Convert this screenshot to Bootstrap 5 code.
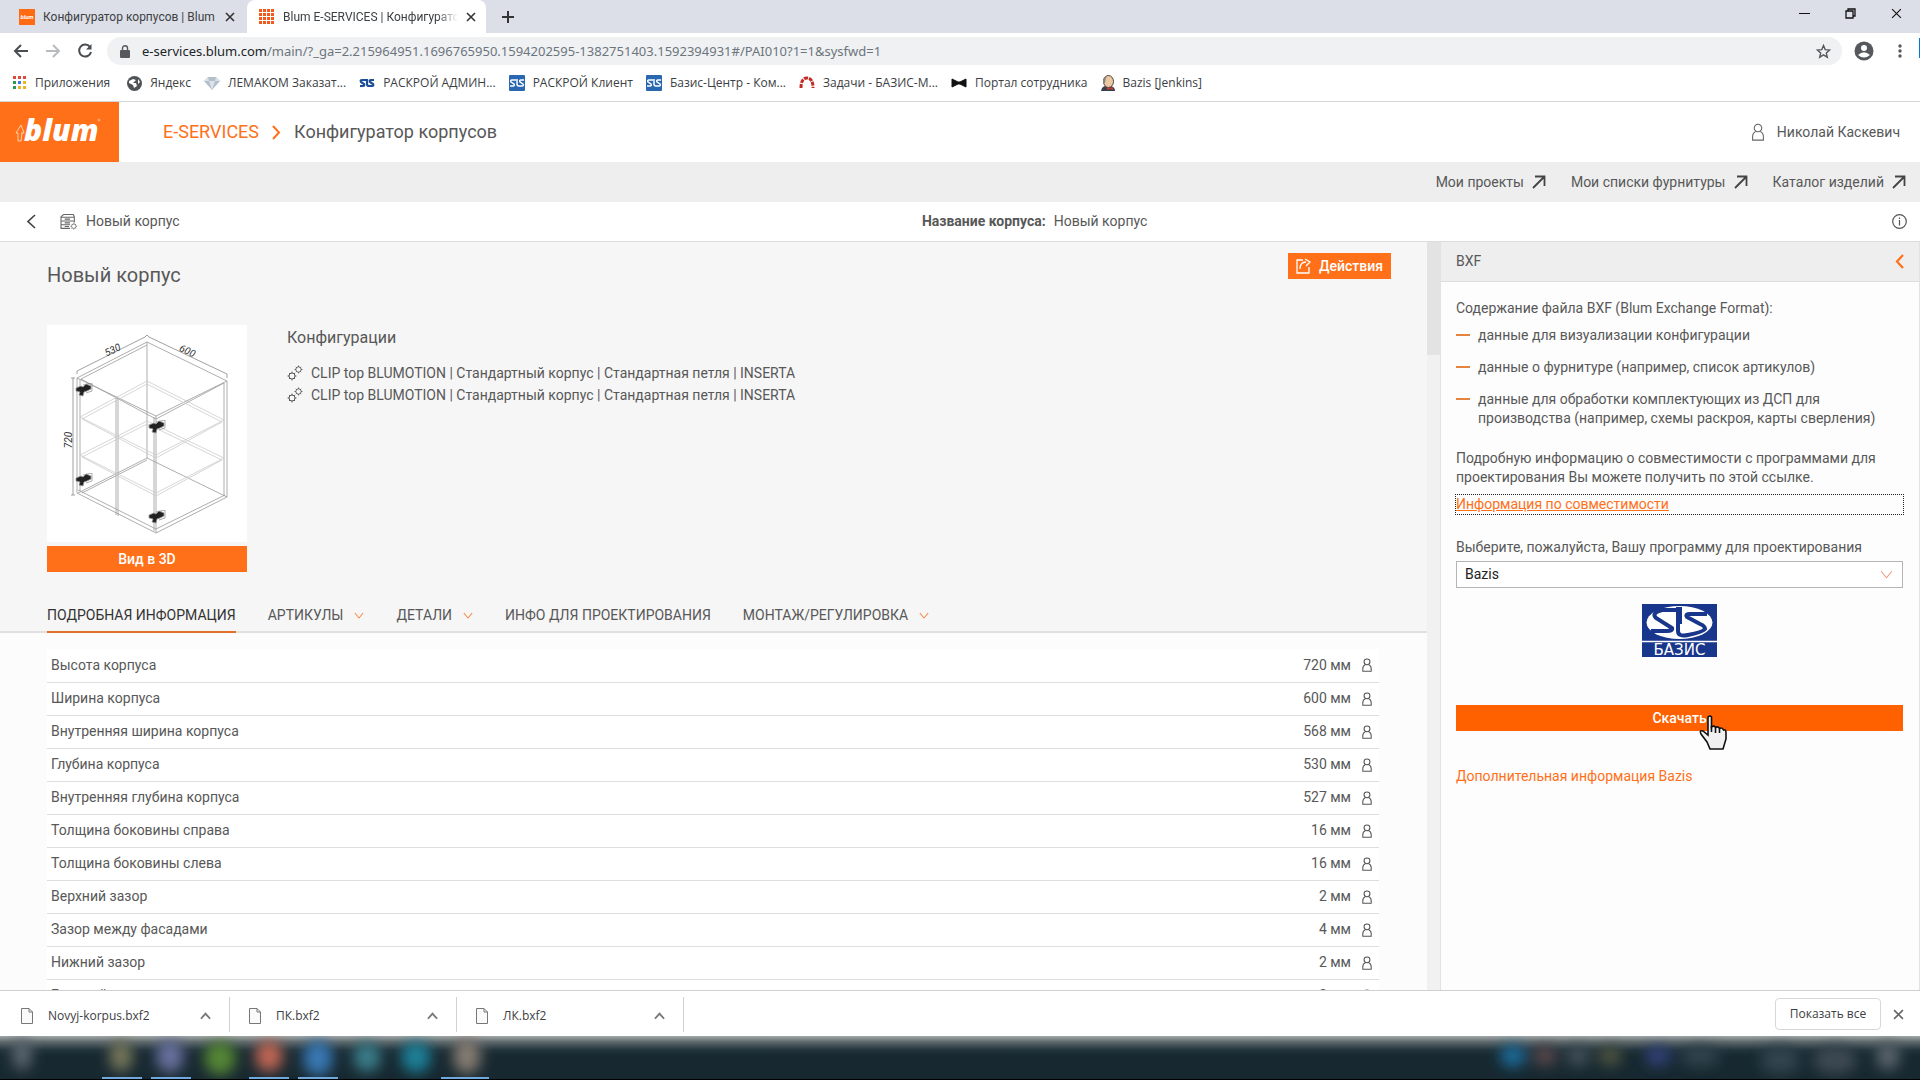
<!DOCTYPE html>
<html lang="ru">
<head>
<meta charset="utf-8">
<meta name="viewport" content="width=device-width, initial-scale=1">
<title>Blum E-SERVICES | Конфигуратор корпусов</title>
<link href="https://cdn.jsdelivr.net/npm/bootstrap@5.3.0/dist/css/bootstrap.min.css" rel="stylesheet">
<style>
:root{--blum:#ff7019;--ink:#585858;--line:#ddd}
body{font-family:Roboto,"Noto Sans",sans-serif;font-size:14px;line-height:19px;color:var(--ink);background:#fff}
button{background:none;border:0;padding:0;color:inherit}
svg{display:block;flex:none}
a{color:inherit;text-decoration:none}
.chrome{font-family:"Open Sans","Noto Sans",sans-serif;font-size:12px;line-height:16px;color:#3c4043}
.tabstrip{height:33px;background:#dcdfe7;font-family:Roboto,sans-serif}
.btab{width:247px;padding:0 12px 0 19px;gap:8px}
.btab.on{width:239px;background:#fff;border-radius:8px 8px 0 0;padding:0 10px 0 12px}
.btab .cap{flex:1;overflow:hidden;white-space:nowrap}
.btab.on .cap{-webkit-mask-image:linear-gradient(90deg,#000 88%,transparent);mask-image:linear-gradient(90deg,#000 88%,transparent)}
.winbtns{gap:35px;padding:0 18px 6px 0}
.toolbar{padding:4px 18px 0 13px}
.omni{height:28px;border-radius:14px;background:#f0f1f3;padding:0 11px 0 13px;gap:12px;margin-left:14px;font-size:13px;font-family:"Noto Sans",sans-serif}
.bookmarks{height:37px;padding:0 13px;border-bottom:1px solid #d5d6d8}
.bookmarks nav{gap:13px}
.bookmarks a{white-space:nowrap}
.edge{position:absolute;right:0;top:38px;width:1px;height:20px;background:#0078d7}
.brandbar{height:60px}
.logo{width:119px;height:60px;background:var(--blum)}
.crumbs{font-size:18px;line-height:24px;padding-left:44px;gap:13px}
.orange{color:var(--blum)}
.linksbar{height:40px;background:#eee;padding-right:14px;gap:25px}
.titlebar{height:40px;border-bottom:1px solid var(--line);padding:0 13px 0 26px}
.titlebar .back{width:48%}
.titlebar .case{margin-right:28px;margin-left:-7px}
.work{min-height:0}
.leftpane{min-width:0;background:#fcfcfc}
.summary{background:#f6f6f6;border-bottom:2px solid #e0e0e0;padding:11px 36px 0 47px}
.summary h1{font-size:20px;line-height:26px;padding-top:9px;margin:0;font-weight:400}
.obtn{background:var(--blum);color:#fff;font-weight:500;height:26px;line-height:26px}
.overview{padding-top:37px}
.preview{width:200px}
.preview .pic{background:#fff;height:217px;margin-bottom:4px}
.configs{padding:2px 0 0 40px}
.summary h2{font-size:16px;line-height:22px;margin:0 0 13px;font-weight:400}
.conf{line-height:22px;gap:8px}
.sections{gap:32px;height:61px;margin-bottom:-2px}
.sections button{height:29px;border-bottom:2px solid transparent;padding-bottom:4px;gap:11px}
.sections button.on{color:#333;border-color:#e0702c}
.specs{margin:16px 0 0;width:calc(100% - 95px);margin-left:47px;background:#fff}
.specs td,.specs th{height:33px;padding:0 4px;border-bottom:1px solid var(--line);font-weight:400}
.measure{gap:11px;padding-right:3px}
.track{width:13px;background:#f1f1f1}
.thumb{height:113px;background:#e3e3e3}
.bxf{width:480px;border-left:1px solid #e2e2e2;border-right:1px solid #e2e2e2;background:#fdfdfd}
.bxf header{height:40px;background:#eee;border-bottom:1px solid var(--line);padding:0 15px}
.bxfbody{padding:17px 16px 0 15px}
.dashes{list-style:none;margin:0;padding:8px 0 0}
.dashes li{padding-left:22px;margin-bottom:13px;position:relative}
.dashes li::before{content:"";position:absolute;left:0;top:8px;width:14px;height:2px;background:#e5843f}
.compat{outline:1px dotted #222;color:var(--blum);text-decoration:underline;margin:8px 0 24px}
.prog{appearance:none;width:100%;height:27px;border:1px solid #b5b5b5;border-radius:0;padding:0 8px;background:#fff;color:#222}
.prog+svg{position:absolute;right:10px;top:9px}
.hand{position:absolute;left:243px;top:10px}
.download{background:#ff6000}
.moreinfo{margin-top:36px}
.dl{height:46px;border-top:1px solid #cfd0d2;padding-top:1px}
.dl .file{width:227px;padding:2px 18px 0 19px;border-right:1px solid #d0d0d0;margin:5px 0 4px;gap:15px}
.dl .file:first-child{width:230px;padding-left:21px}
.showall{border:1px solid #d6d8da;border-radius:4px;height:32px;width:106px}
.taskbar{height:44px;background:linear-gradient(#a3a8a8,#5d686b 6px,#22343c 14px,#172830 20px,#172830);border-bottom:1px solid #000;overflow:hidden}
</style>
<script src="https://cdn.jsdelivr.net/npm/bootstrap@5.3.0/dist/js/bootstrap.bundle.min.js"></script>
</head>
<body class="vh-100 d-flex flex-column overflow-hidden">
<svg width="0" height="0" class="position-absolute">
<defs>
<symbol id="user" viewBox="0 0 14 20"><circle cx="7" cy="5.500" r="4.200"/><path d="M4.500 9.500C2 10.500 1 13 1 15.500V19H13V15.500C13 13 12 10.500 9.500 9.500"/></symbol>
<symbol id="ne" viewBox="0 0 14 14"><path d="M1 13L12 2M3 1.500H12.500V11" /></symbol>
<symbol id="x" viewBox="0 0 10 10"><path d="M1 1L9 9M9 1L1 9"/></symbol>
<symbol id="down" viewBox="0 0 12 8"><path d="M1 1L6 7L11 1"/></symbol>
<symbol id="up" viewBox="0 0 12 8"><path d="M1 7L6 1.500L11 7"/></symbol>
<symbol id="gear" viewBox="0 0 10 10"><circle cx="5" cy="5" r="3"/><path d="M5 2V.6M5 8V9.400M2 5H.6M8 5H9.400M2.900 2.900L2 2M7.100 2.900L8 2M2.900 7.100L2 8M7.100 7.100L8 8"/></symbol>
<symbol id="page" viewBox="0 0 12 16"><path d="M.5.5H8L11.500 4V15.500H.5ZM8 .5V4H11.500" fill="#fafafa" stroke="#777"/></symbol>
<symbol id="hinge" viewBox="0 0 18 14"><path d="M1 5L6 3L8 4L11 1L16 3V6L12 8L9 9L8 13L4 12L5 9L1 8Z" fill="#222"/><path d="M8 2L17 0V8L11 10" fill="none" stroke="#777" stroke-width=".6"/></symbol>
<symbol id="sls" viewBox="0 0 16 16"><path d="M7 5H3Q1 5 2 7L5 9Q6 11 4 11H1M8 4V9Q8 11 10 11H13Q15 11 14 9L11 7Q10 5 12 5H15" fill="none"/></symbol>
</defs>
</svg>

<div class="chrome">
  <div class="tabstrip d-flex align-items-center">
    <div class="btab d-flex align-items-center h-100">
      <svg width="16" height="16"><rect width="16" height="16" fill="#ff6a13"/><text x="8" y="10" font-size="6" font-weight="700" font-style="italic" fill="#fff" text-anchor="middle">blum</text></svg>
      <span class="cap">Конфигуратор корпусов | Blum</span>
      <button aria-label="Закрыть"><svg width="10" height="10" stroke="#333" stroke-width="1.600"><use href="#x"/></svg></button>
    </div>
    <div class="btab on d-flex align-items-center h-100">
      <svg width="16" height="16" viewBox="0 0 16 16" fill="none" stroke="#f05a1a" stroke-width="3" stroke-dasharray="3 1"><path d="M0 1.500H16M0 5.500H16M0 9.500H16M0 13.500H16"/></svg>
      <span class="cap">Blum E-SERVICES | Конфигуратор</span>
      <button aria-label="Закрыть"><svg width="10" height="10" stroke="#333" stroke-width="1.600"><use href="#x"/></svg></button>
    </div>
    <button class="ms-3" aria-label="Новая вкладка"><svg width="12" height="12" stroke="#333" stroke-width="2"><path d="M6 0V12M0 6H12"/></svg></button>
    <div class="winbtns d-flex align-items-center ms-auto">
      <button aria-label="Свернуть"><svg width="11" height="11" stroke="#111"><path d="M0 5.500H11"/></svg></button>
      <button aria-label="Окно"><svg width="11" height="11" stroke="#111" fill="none" stroke-width="1.300"><path d="M1 3H8V10H1ZM3 3V1H10V8H8"/></svg></button>
      <button aria-label="Закрыть окно"><svg width="11" height="11" stroke="#111" viewBox="0 0 10 10"><use href="#x"/></svg></button>
    </div>
  </div>
  <div class="toolbar d-flex align-items-center">
    <div class="d-flex align-items-center gap-3">
      <button aria-label="Назад"><svg width="16" height="16" fill="none" stroke="#4a4d51" stroke-width="2"><path d="M15 8H2M8 2L2 8L8 14"/></svg></button>
      <button aria-label="Вперёд"><svg width="16" height="16" fill="none" stroke="#b9bbbe" stroke-width="2"><path d="M1 8H14M8 2L14 8L8 14"/></svg></button>
      <button aria-label="Обновить"><svg width="16" height="16" fill="none" stroke="#4a4d51" stroke-width="2"><path d="M13 4A6 6 0 1 0 14 9"/><path d="M14.500 1V6.500H9Z" fill="#4a4d51" stroke="none"/></svg></button>
    </div>
    <div class="omni d-flex align-items-center flex-fill">
      <svg width="10" height="13" fill="#55585c"><rect y="5" width="10" height="8" rx="1"/><path d="M2.500 5V3A2.500 2.200 0 0 1 7.500 3V5" fill="none" stroke="#55585c" stroke-width="1.400"/></svg>
      <div class="flex-fill text-secondary"><span class="text-dark">e-services.blum.com</span>/main/?_ga=2.215964951.1696765950.1594202595-1382751403.1592394931#/PAI010?1=1&amp;sysfwd=1</div>
      <svg width="15" height="15" viewBox="0 0 15 15" fill="none" stroke="#55585c" stroke-width="1.400"><path d="M7.500 1.500L9.200 5.600L13.600 6L10.300 8.900L11.300 13.200L7.500 10.900L3.700 13.200L4.700 8.900L1.400 6L5.800 5.600Z"/></svg>
    </div>
    <button class="ms-2 ps-1" aria-label="Профиль"><svg width="20" height="20" viewBox="0 0 20 20"><circle cx="10" cy="10" r="9.500" fill="#55585c"/><circle cx="10" cy="7" r="3" fill="#fff"/><path d="M4 14Q10 8.500 16 14Q10 19 4 14" fill="#fff"/></svg></button>
    <button class="ms-4" aria-label="Меню"><svg width="4" height="14" fill="#55585c"><circle cx="2" cy="2" r="1.700"/><circle cx="2" cy="7" r="1.700"/><circle cx="2" cy="12" r="1.700"/></svg></button>
  </div>
  <div class="bookmarks d-flex align-items-center">
    <nav class="d-flex align-items-center">
    <a href="#" class="d-flex gap-2 align-items-center"><svg width="14" height="14" viewBox="0 0 14 14"><g fill="#e0483e"><path d="M0 0H3V3H0ZM5 0H8V3H5ZM10 0H13V3H10Z"/></g><path d="M0 5H3V8H0Z" fill="#2c9b52"/><path d="M5 5H8V8H5Z" fill="#3d7de0"/><path d="M10 5H13V8H10ZM5 10H8V13H5ZM10 10H13V13H10Z" fill="#e9b427"/><path d="M0 10H3V13H0Z" fill="#2c9b52"/></svg>Приложения</a>
    <a href="#" class="d-flex gap-2 align-items-center ms-1"><svg width="15" height="15" viewBox="0 0 15 15"><circle cx="7.500" cy="7.500" r="7.500" fill="#505356"/><path d="M2 5L6 3L9 4L6 7H9L10 10L7 12L6 9L2 7ZM11 3L13 6L11 8Z" fill="#fff"/></svg>Яндекс</a>
    <a href="#" class="d-flex gap-2 align-items-center"><svg width="16" height="14"><path d="M4 1H12L16 5L8 14L0 5Z" fill="#b4bfc9"/><path d="M5 5H11L8 14ZM4 1L5 5H0ZM12 1L11 5H16Z" fill="#dbe3ea"/></svg>ЛЕМАКОМ Заказат...</a>
    <a href="#" class="d-flex gap-2 align-items-center"><svg width="16" height="16" stroke="#1d4f96" stroke-width="2.200"><use href="#sls"/></svg>РАСКРОЙ АДМИН...</a>
    <a href="#" class="d-flex gap-2 align-items-center"><svg width="16" height="16"><rect width="16" height="16" rx="1" fill="#2a67b1"/><use href="#sls" stroke="#fff" stroke-width="1.500"/></svg>РАСКРОЙ Клиент</a>
    <a href="#" class="d-flex gap-2 align-items-center"><svg width="16" height="16"><rect width="16" height="16" rx="1" fill="#2a67b1"/><use href="#sls" stroke="#fff" stroke-width="1.500"/></svg>Базис-Центр - Ком...</a>
    <a href="#" class="d-flex gap-2 align-items-center"><svg width="16" height="14"><path d="M2 12Q2 2 8 2Q14 2 14 12" fill="none" stroke="#c52a22" stroke-width="3" stroke-dasharray="4 1"/></svg>Задачи - БАЗИС-М...</a>
    <a href="#" class="d-flex gap-2 align-items-center"><svg width="16" height="10"><path d="M1 1L7 4H9L15 1V9L9 6H7L1 9Z" fill="#111" stroke="#111"/></svg>Портал сотрудника</a>
    <a href="#" class="d-flex gap-2 align-items-center"><svg width="14" height="16"><path d="M0 16Q1 11 5 11H10Q14 12 14 16Z" fill="#36414d"/><ellipse cx="7.500" cy="6.500" rx="5" ry="6" fill="#e8c9a4" stroke="#5a4536"/><path d="M2 8Q1 2 6 1Q4 4 4 8Z" fill="#8a8478"/><path d="M6 12L9 13L12 12V15L9 14L6 15Z" fill="#c43a2e"/></svg>Bazis [Jenkins]</a>
    </nav>
  </div>
  <div class="edge"></div>
</div>

<header>
  <div class="brandbar d-flex align-items-center">
    <a href="#" class="logo" aria-label="blum"><svg width="119" height="60" viewBox="0 0 119 60"><text x="24" y="39" font-family="Open Sans" font-size="30" font-weight="800" font-style="italic" fill="#fff">blum</text><path d="M18 39V31H16L21 23L24 31H21M18 39H21L22 31" fill="none" stroke="#ffd9bd" stroke-width=".9"/><circle cx="99" cy="18" r="1" fill="none" stroke="#ffd9bd" stroke-width=".6"/></svg></a>
    <div class="crumbs d-flex align-items-center"><a href="#" class="orange">E-SERVICES</a><svg width="9" height="15" fill="none" stroke="#ff7019" stroke-width="2"><path d="M1 1L7 7.500L1 14"/></svg><span>Конфигуратор корпусов</span></div>
    <a href="#" class="ms-auto d-flex align-items-center pe-3 me-1"><svg width="14" height="18" fill="none" stroke="#666" stroke-width="1.200" class="me-2"><use href="#user"/></svg><span class="ps-1">Николай Каскевич</span></a>
  </div>
  <nav class="linksbar d-flex align-items-center justify-content-end">
    <a href="#" class="d-flex align-items-center gap-2">Мои проекты <svg width="14" height="14" fill="none" stroke="#444" stroke-width="1.800"><use href="#ne"/></svg></a>
    <a href="#" class="d-flex align-items-center gap-2">Мои списки фурнитуры <svg width="14" height="14" fill="none" stroke="#444" stroke-width="1.800"><use href="#ne"/></svg></a>
    <a href="#" class="d-flex align-items-center gap-2">Каталог изделий <svg width="14" height="14" fill="none" stroke="#444" stroke-width="1.800"><use href="#ne"/></svg></a>
  </nav>
  <div class="titlebar d-flex align-items-center">
    <div class="back d-flex align-items-center"><button aria-label="Назад"><svg width="10" height="15" fill="none" stroke="#444" stroke-width="1.700"><path d="M9 1L2 7.500L9 14"/></svg></button>
      <svg class="ms-4 me-2" width="18" height="16" viewBox="0 0 16 15" fill="none" stroke="#666"><path d="M3 .5H12L13 2.500V8M3 .5L.5 2.500V13.500H9M.5 3H12.500M.5 6.500H12.500M.5 10H9M4 4.800H9M4 8.300H9M4 11.800H8"/><use href="#gear" x="9" y="8" width="7" height="7"/></svg>Новый корпус</div>
    <div class="case"><b class="fw-bold me-2">Название корпуса:</b>Новый корпус</div>
    <button class="ms-auto" aria-label="Информация"><svg width="15" height="15" fill="none" stroke="#555" stroke-width="1.200"><circle cx="7.500" cy="7.500" r="6.800"/><path d="M7.500 6V11.500M7.500 3.500V5"/></svg></button>
  </div>
</header>

<main class="work d-flex flex-fill">
  <div class="leftpane flex-fill overflow-hidden">
    <section class="summary">
      <div class="d-flex justify-content-between align-items-start">
        <h1>Новый корпус</h1>
        <button class="obtn d-flex align-items-center gap-2 px-2"><svg width="15" height="16" fill="none" stroke="#fff" stroke-width="1.300"><path d="M7 2H1V15H13V9M4 11Q4 4 10 4M9 1L14 4L10 8"/></svg>Действия</button>
      </div>
      <div class="overview d-flex">
        <div class="preview">
          <div class="pic"><svg width="200" height="217" viewBox="0 0 200 217" fill="none" stroke="#999" stroke-width=".8">
            <path d="M100 17L30 53L109 91L180 56ZM100 20L34 54L109 94L177 58M30 53V168L109 208L180 172V56M33 54V166M177 58V171M100 17V133L31 168M100 133L180 172M109 91V208M107 92V206M69 72V190M71 73V191M31 165L109 204L178 170M100 135L35 168"/>
            <path d="M33 92L100 56L177 95L109 130ZM35 94L100 59L175 97L109 133Z" stroke="#ccc"/><path d="M33 130L100 96L177 133L109 168ZM35 132L100 99L175 135L109 171Z" stroke="#ccc"/>
            <path d="M30 49V46L98 12M102 12L180 49V53M26 53V170M24 53H28M24 170H28M98 12L100 10L102 12" stroke="#888"/>
            <g fill="#333" stroke="none" font-size="10" font-style="italic" text-anchor="middle"><text transform="translate(67 28) rotate(-25)">530</text><text transform="translate(139 29) rotate(25)">600</text><text transform="translate(25 115) rotate(-90)">720</text></g>
            <use href="#hinge" x="28" y="58" width="18" height="14"/><use href="#hinge" x="28" y="148" width="18" height="14"/><use href="#hinge" x="101" y="95" width="18" height="14"/><use href="#hinge" x="101" y="185" width="18" height="14"/>
          </svg></div>
          <button class="obtn w-100">Вид в 3D</button>
        </div>
        <div class="configs">
          <h2>Конфигурации</h2>
          <div class="conf d-flex align-items-center"><svg width="16" height="16" fill="none" stroke="#555"><use href="#gear" x="0" y="6" width="10" height="10"/><use href="#gear" x="7" y="0" width="9" height="9"/></svg>CLIP top BLUMOTION | Стандартный корпус | Стандартная петля | INSERTA</div>
          <div class="conf d-flex align-items-center"><svg width="16" height="16" fill="none" stroke="#555"><use href="#gear" x="0" y="6" width="10" height="10"/><use href="#gear" x="7" y="0" width="9" height="9"/></svg>CLIP top BLUMOTION | Стандартный корпус | Стандартная петля | INSERTA</div>
        </div>
      </div>
      <nav class="sections d-flex align-items-end">
        <button class="on">ПОДРОБНАЯ ИНФОРМАЦИЯ</button>
        <button class="d-flex align-items-center">АРТИКУЛЫ<svg width="10" height="7" fill="none" stroke="#f58a4b" stroke-width="1.300"><use href="#down"/></svg></button>
        <button class="d-flex align-items-center">ДЕТАЛИ<svg width="10" height="7" fill="none" stroke="#f58a4b" stroke-width="1.300"><use href="#down"/></svg></button>
        <button>ИНФО ДЛЯ ПРОЕКТИРОВАНИЯ</button>
        <button class="d-flex align-items-center">МОНТАЖ/РЕГУЛИРОВКА<svg width="10" height="7" fill="none" stroke="#f58a4b" stroke-width="1.300"><use href="#down"/></svg></button>
      </nav>
    </section>
    <table class="specs"><tbody id="rows"></tbody></table>
  </div>
  <div class="track"><div class="thumb"></div></div>
  <aside class="bxf">
    <header class="d-flex align-items-center justify-content-between"><span>BXF</span><button aria-label="Свернуть панель"><svg width="9" height="15" fill="none" stroke="#ff7019" stroke-width="2.200"><path d="M8 1L2 7.500L8 14"/></svg></button></header>
    <div class="bxfbody">
      <div>Содержание файла BXF (Blum Exchange Format):</div>
      <ul class="dashes"><li>данные для визуализации конфигурации</li><li>данные о фурнитуре (например, список артикулов)</li><li>данные для обработки комплектующих из ДСП для производства (например, схемы раскроя, карты сверления)</li></ul>
      <div class="pt-2">Подробную информацию о совместимости с программами для проектирования Вы можете получить по этой ссылке.</div>
      <a href="#" class="compat d-block">Информация по совместимости</a>
      <label for="prog" class="d-block mb-1">Выберите, пожалуйста, Вашу программу для проектирования</label>
      <div class="position-relative"><select id="prog" class="prog d-block"><option>Bazis</option></select><svg width="13" height="9" viewBox="0 0 12 8" fill="none" stroke="#f0957a"><use href="#down"/></svg></div>
      <svg class="mx-auto mt-3 mb-5" width="75" height="53" viewBox="0 0 75 53"><rect width="75" height="53" fill="#18368c"/><path d="M0 37.500H75" stroke="#fff" stroke-width="1.500"/><ellipse cx="37.500" cy="18.500" rx="33" ry="16.500" fill="#fff"/><path d="M34 6H20Q9 9 14 14L30 24Q31 27 25 27H9M36 3V27Q36 33 46 31Q61 28 63 25Q63 22 58 20L45 13Q43 10 48 10H65M38 3V20" fill="none" stroke="#18368c" stroke-width="4"/><text x="37.500" y="51" font-family="DejaVu Sans" font-size="15" fill="#fff" text-anchor="middle">БАЗИС</text></svg>
      <div class="position-relative"><button class="obtn w-100 download">Скачать</button>
        <svg class="hand" width="28" height="35" viewBox="0 0 28 35"><path d="M9 2Q11 0 12.500 2V12Q15 10 16.500 12.500Q19 11 20.500 13.500Q23 12 24.500 15Q27 14 27 18V24L24 34H11L8 27L2 19Q0 15 4 16L9 20Z" fill="#f1f1f1" stroke="#111" stroke-width="1.600"/><path d="M12.500 11V17M16.500 13V18M20.500 14V18" stroke="#111" stroke-width="1.600"/></svg></div>
      <a href="#" class="orange d-block moreinfo">Дополнительная информация Bazis</a>
    </div>
  </aside>
</main>

<footer>
  <div class="dl chrome d-flex">
    <div class="file d-flex align-items-center"><svg width="12" height="16"><use href="#page"/></svg><span class="flex-fill">Novyj-korpus.bxf2</span><button aria-label="Меню файла"><svg width="11" height="8" fill="none" stroke="#777" stroke-width="2"><use href="#up"/></svg></button></div>
    <div class="file d-flex align-items-center"><svg width="12" height="16"><use href="#page"/></svg><span class="flex-fill">ПК.bxf2</span><button aria-label="Меню файла"><svg width="11" height="8" fill="none" stroke="#777" stroke-width="2"><use href="#up"/></svg></button></div>
    <div class="file d-flex align-items-center"><svg width="12" height="16"><use href="#page"/></svg><span class="flex-fill">ЛК.bxf2</span><button aria-label="Меню файла"><svg width="11" height="8" fill="none" stroke="#777" stroke-width="2"><use href="#up"/></svg></button></div>
    <div class="ms-auto d-flex align-items-center gap-2 pe-2 me-1"><button class="showall me-1">Показать все</button><button class="me-1" aria-label="Закрыть"><svg width="11" height="11" viewBox="0 0 10 10" stroke="#666" stroke-width="1.500"><use href="#x"/></svg></button></div>
  </div>
  <div class="taskbar"><svg width="1920" height="43"><defs><filter id="soft" x="-60%" y="-60%" width="220%" height="220%"><feGaussianBlur stdDeviation="7"/></filter></defs>
    <g filter="url(#soft)"><ellipse cx="22" cy="18" rx="10" ry="16" fill="#5d6670"/><ellipse cx="121" cy="20" rx="12" ry="16" fill="#74765a"/><ellipse cx="170" cy="20" rx="14" ry="17" fill="#686f9d"/><ellipse cx="220" cy="22" rx="16" ry="17" fill="#558634"/><ellipse cx="269" cy="20" rx="14" ry="16" fill="#c06654"/><ellipse cx="318" cy="22" rx="15" ry="18" fill="#3878b4"/><ellipse cx="367" cy="21" rx="14" ry="15" fill="#3a7d8a"/><ellipse cx="416" cy="21" rx="15" ry="16" fill="#1f8098"/><ellipse cx="467" cy="20" rx="14" ry="18" fill="#857c72"/>
    <ellipse cx="1513" cy="20" rx="13" ry="11" fill="#1f6d9c"/><ellipse cx="1545" cy="20" rx="12" ry="10" fill="#5b4a4c"/><ellipse cx="1578" cy="20" rx="12" ry="10" fill="#44525a"/><ellipse cx="1610" cy="20" rx="12" ry="10" fill="#50553f"/><ellipse cx="1658" cy="20" rx="13" ry="10" fill="#33437c"/><ellipse cx="1700" cy="20" rx="20" ry="10" fill="#33444d"/><ellipse cx="1780" cy="24" rx="20" ry="14" fill="#33444d"/><ellipse cx="1835" cy="24" rx="22" ry="14" fill="#3c4a53"/><ellipse cx="1888" cy="20" rx="12" ry="14" fill="#59646b"/></g>
    <path d="M102 42H142M151 42H191M249 42H289M298 42H338M441 42H489" stroke="#72a9dd" stroke-width="2"/></svg></div>
</footer>
<script>
[["Высота корпуса","720"],["Ширина корпуса","600"],["Внутренняя ширина корпуса","568"],["Глубина корпуса","530"],["Внутренняя глубина корпуса","527"],["Толщина боковины справа","16"],["Толщина боковины слева","16"],["Верхний зазор","2"],["Зазор между фасадами","4"],["Нижний зазор","2"],["Боковой зазор","2"]].forEach(([name,v])=>{
  document.getElementById("rows").insertAdjacentHTML("beforeend",`<tr><th scope="row">${name}</th><td><div class="measure d-flex justify-content-end align-items-center"><span>${v} мм</span><svg width="10" height="14" viewBox="0 0 14 20" fill="none" stroke="#555" stroke-width="1.500"><use href="#user"/></svg></div></td></tr>`);
});
</script>
</body>
</html>
